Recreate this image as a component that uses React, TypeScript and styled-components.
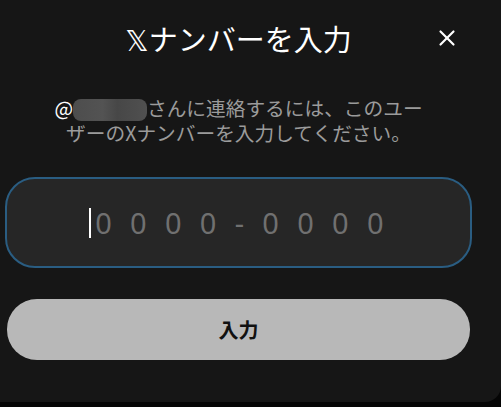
import { createGlobalStyle } from "styled-components";
import styled from "styled-components";
import { X } from "lucide-react";

const GlobalStyle = createGlobalStyle`
  html, body {
    margin: 0;
    padding: 0;
    background: #050505;
  }
  body {
    font-family: "Noto Sans CJK JP", "Noto Sans", "DejaVu Sans", sans-serif;
  }
`;

const Panel = styled.div`
  width: 501px;
  height: 402px;
  box-sizing: border-box;
  padding: 20px 29px 0 5px;
  background: #161616;
  border-bottom-right-radius: 16px;
  display: flex;
  flex-direction: column;
`;

const Header = styled.div`
  position: relative;
  display: flex;
  justify-content: center;
  align-items: center;
  height: 36px;
`;

const Title = styled.h1`
  margin: 0;
  font-size: 29px;
  line-height: 36px;
  font-weight: 400;
  color: #ffffff;
  font-family: "Noto Sans CJK JP", "DejaVu Sans", sans-serif;
`;

const CloseButton = styled.button`
  position: absolute;
  right: 12px;
  top: 5px;
  width: 26px;
  height: 26px;
  padding: 0;
  border: none;
  background: transparent;
  color: #ffffff;
  display: flex;
  align-items: center;
  justify-content: center;
  cursor: pointer;
`;

const Description = styled.p`
  margin: 40px 0 0;
  text-align: center;
  font-size: 19.7px;
  line-height: 24px;
  color: #9b9b9b;
`;

const Handle = styled.span`
  color: #ffffff;
`;

const Blurred = styled.span`
  display: inline-block;
  width: 74px;
  height: 22px;
  vertical-align: -5px;
  border-radius: 8px;
  background: linear-gradient(
    90deg,
    #4d4d4d 0%,
    #535353 40%,
    #474747 60%,
    #505050 100%
  );
  filter: blur(0.6px);
`;

const CodeField = styled.div`
  margin-top: 32px;
  height: 91px;
  box-sizing: border-box;
  border: 2px solid #2a5d82;
  border-radius: 30px;
  background: #262626;
  display: flex;
  align-items: center;
  justify-content: center;
  gap: 4px;
`;

const Caret = styled.span`
  width: 2px;
  height: 30px;
  background: #ffffff;
`;

const Placeholder = styled.span`
  font-family: "Noto Sans", "Open Sans", sans-serif;
  font-size: 29px;
  letter-spacing: 18.3px;
  margin-right: -14px;
  color: #707070;
`;

const SubmitButton = styled.button`
  margin: 31px 2px 0;
  height: 61px;
  border: none;
  border-radius: 30px;
  background: #b8b8b8;
  color: #111111;
  font-family: "Noto Sans CJK JP", sans-serif;
  font-size: 20px;
  font-weight: 700;
  cursor: pointer;
`;

export default function App() {
  return (
    <>
      <GlobalStyle />
      <Panel>
        <Header>
          <Title>𝕏ナンバーを入力</Title>
          <CloseButton aria-label="閉じる">
            <X size={26} strokeWidth={2} />
          </CloseButton>
        </Header>
        <Description>
          <Handle>@</Handle>
          <Blurred />
          さんに連絡するには、このユー
          <br />
          ザーのXナンバーを入力してください。
        </Description>
        <CodeField>
          <Caret />
          <Placeholder>0000-0000</Placeholder>
        </CodeField>
        <SubmitButton>入力</SubmitButton>
      </Panel>
    </>
  );
}
